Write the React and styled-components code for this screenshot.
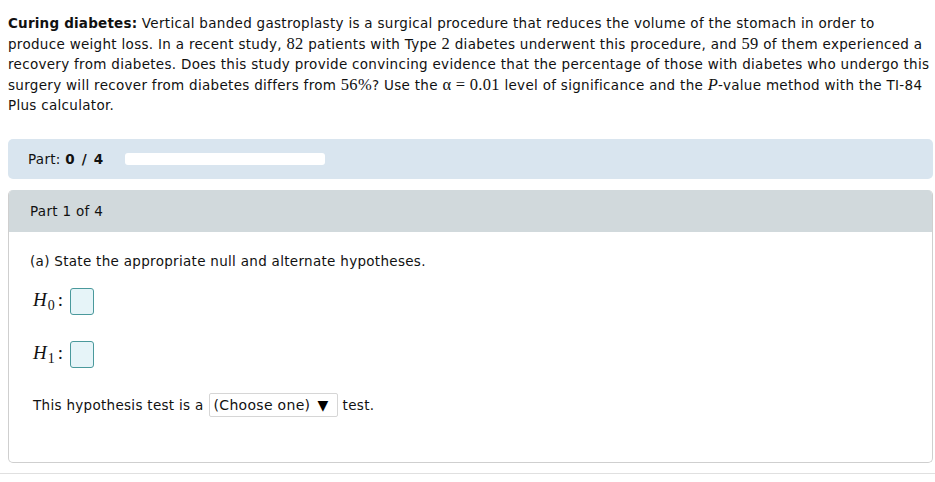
import React from "react";
import styled, { createGlobalStyle } from "styled-components";

const GlobalStyle = createGlobalStyle`
  html, body {
    margin: 0;
    padding: 0;
    background: #ffffff;
  }
  body {
    font-family: "DejaVu Sans", Verdana, sans-serif;
    font-size: 13.5px;
    letter-spacing: 0.3px;
    color: #111;
  }
`;

const Page = styled.div`
  width: 935px;
  height: 482px;
  box-sizing: border-box;
  padding: 13px 2px 0 8px;
  overflow: hidden;
  display: flex;
  flex-direction: column;
`;

const Question = styled.p`
  margin: 0;
  line-height: 20.5px;
  white-space: nowrap;
`;

const Lead = styled.b`
  font-weight: bold;
  letter-spacing: 0.2px;
`;

const M = styled.span`
  font-family: "Liberation Serif", "Times New Roman", serif;
  font-size: 16.5px;
  letter-spacing: 0.3px;
  font-style: ${(p) => (p.$italic ? "italic" : "normal")};
`;

const ProgressPanel = styled.div`
  margin-top: 23px;
  height: 40px;
  background: #d9e5ef;
  border-radius: 5px;
  display: flex;
  align-items: center;
  padding-left: 20px;
  gap: 21px;
`;

const PartCount = styled.span`
  b {
    font-weight: bold;
    letter-spacing: 1.2px;
  }
`;

const Track = styled.div`
  width: 200px;
  height: 12px;
  background: #ffffff;
  border-radius: 3px;
`;

const Card = styled.div`
  margin-top: 11px;
  height: 273px;
  box-sizing: border-box;
  border: 1px solid #cfcfcf;
  border-top: none;
  border-radius: 5px;
  display: flex;
  flex-direction: column;
  overflow: hidden;
`;

const CardHeader = styled.div`
  height: 42px;
  background: #d1d9dc;
  display: flex;
  align-items: center;
  padding-left: 21px;
`;

const CardBody = styled.div`
  padding: 19px 0 0 21px;
  display: flex;
  flex-direction: column;
`;

const Line = styled.div`
  line-height: 20px;
`;

const HypRow = styled.div`
  display: flex;
  align-items: center;
  margin-top: ${(p) => p.$top}px;
  padding-left: 3px;
`;

const HLabel = styled.span`
  display: inline-block;
  width: 37px;
  font-family: "Liberation Serif", "Times New Roman", serif;
  font-size: 19px;
  font-style: italic;
  letter-spacing: 0;
  line-height: 24px;
  sub {
    font-style: normal;
    font-size: 14px;
    position: relative;
    top: 4px;
    vertical-align: baseline;
    margin-left: 1px;
  }
  .colon {
    font-style: normal;
    margin-left: 3px;
  }
`;

const AnswerBox = styled.span`
  width: 22px;
  height: 25px;
  border: 1px solid #4a999c;
  border-radius: 3px;
  background: #e6f4f8;
`;

const SelectRow = styled.div`
  margin-top: 25px;
  display: flex;
  align-items: center;
  gap: 5px;
  padding-left: 3px;
`;

const Select = styled.span`
  height: 24px;
  box-sizing: border-box;
  width: 129px;
  border: 1px solid #d6d6d6;
  border-radius: 2px;
  display: flex;
  align-items: center;
  justify-content: space-between;
  padding: 0 8px 0 4px;
  font-size: 14px;
`;

const Arrow = styled.span`
  font-size: 14px;
  color: #000;
`;

const BottomRule = styled.div`
  margin: 10px -2px 0 -8px;
  height: 1px;
  background: #e0e0e0;
`;

export default function App() {
  return (
    <>
      <GlobalStyle />
      <Page>
        <Question>
          <Lead>Curing diabetes:</Lead> Vertical banded gastroplasty is a surgical
          procedure that reduces the volume of the stomach in order to
          <br />
          produce weight loss. In a recent study, <M>82</M> patients with Type{" "}
          <M>2</M> diabetes underwent this procedure, and <M>59</M> of them
          experienced a<br />
          recovery from diabetes. Does this study provide convincing evidence that
          the percentage of those with diabetes who undergo this
          <br />
          surgery will recover from diabetes differs from <M>56%</M>? Use the{" "}
          <M>α = 0.01</M> level of significance and the <M $italic>P</M>-value
          method with the TI-84
          <br />
          Plus calculator.
        </Question>

        <ProgressPanel>
          <PartCount>
            Part: <b>0 / 4</b>
          </PartCount>
          <Track />
        </ProgressPanel>

        <Card>
          <CardHeader>Part 1 of 4</CardHeader>
          <CardBody>
            <Line>(a) State the appropriate null and alternate hypotheses.</Line>
            <HypRow $top={17}>
              <HLabel>
                H<sub>0</sub>
                <span className="colon">:</span>
              </HLabel>
              <AnswerBox />
            </HypRow>
            <HypRow $top={26}>
              <HLabel>
                H<sub>1</sub>
                <span className="colon">:</span>
              </HLabel>
              <AnswerBox />
            </HypRow>
            <SelectRow>
              This hypothesis test is a
              <Select>
                (Choose one) <Arrow>▼</Arrow>
              </Select>
              test.
            </SelectRow>
          </CardBody>
        </Card>
        <BottomRule />
      </Page>
    </>
  );
}
